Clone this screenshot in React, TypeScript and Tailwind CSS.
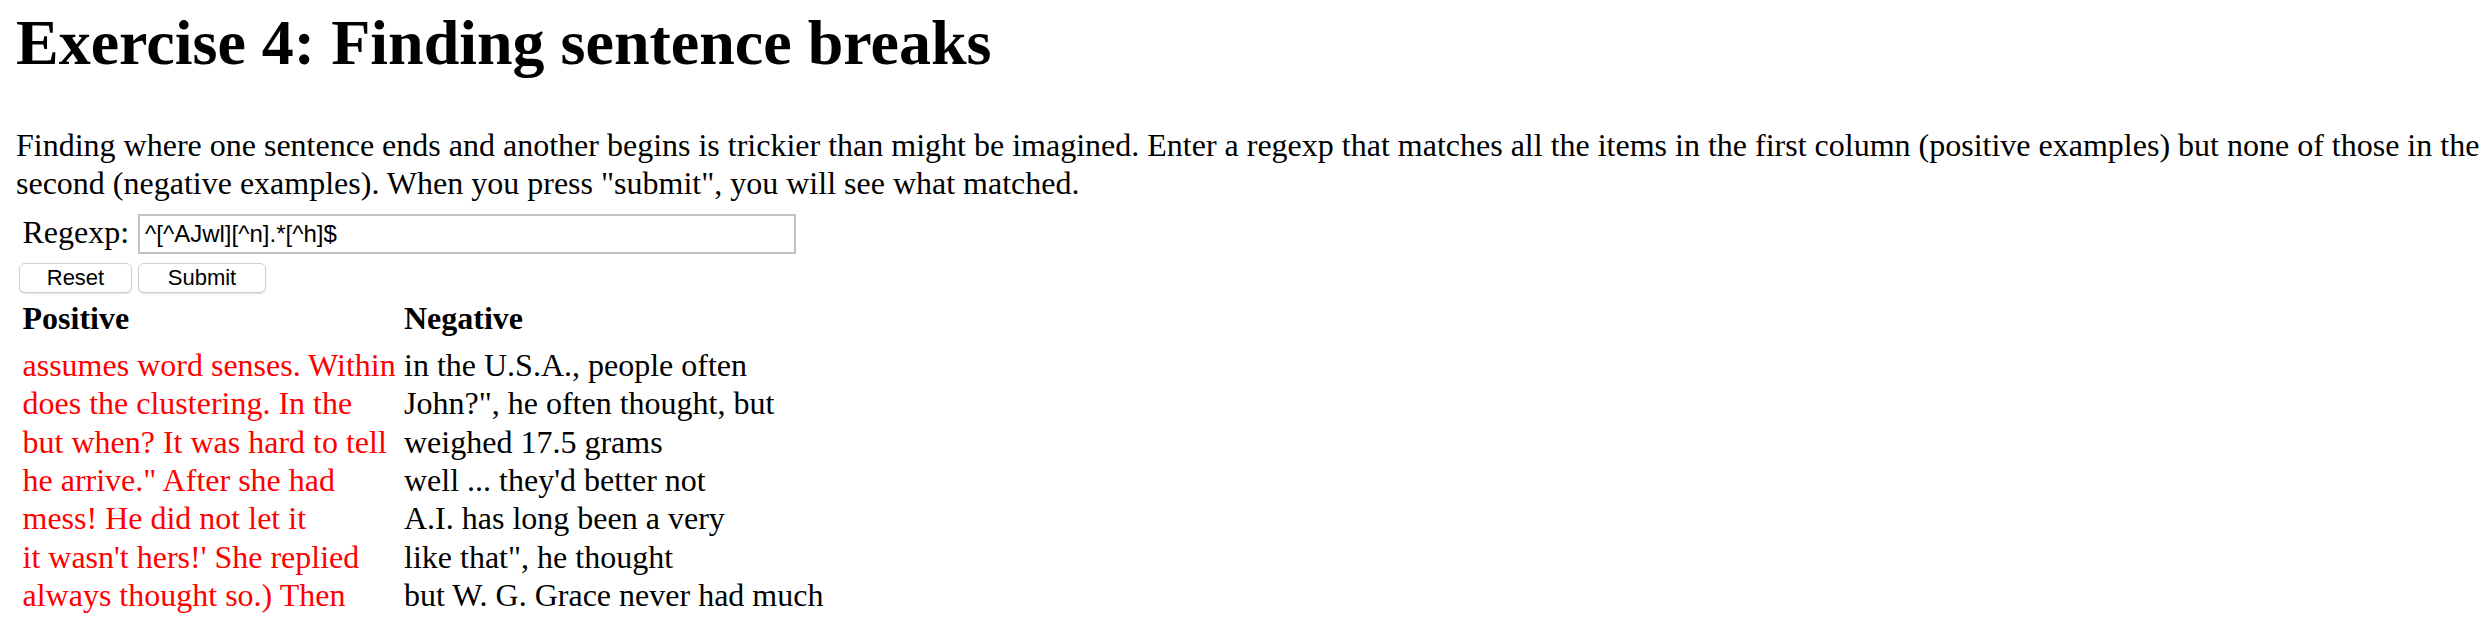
import React from "react";

const positives = [
  "assumes word senses. Within",
  "does the clustering. In the",
  "but when? It was hard to tell",
  'he arrive." After she had',
  "mess! He did not let it",
  "it wasn't hers!' She replied",
  "always thought so.) Then",
];

const negatives = [
  "in the U.S.A., people often",
  'John?", he often thought, but',
  "weighed 17.5 grams",
  "well ... they'd better not",
  "A.I. has long been a very",
  'like that", he thought',
  "but W. G. Grace never had much",
];

export default function App() {
  return (
    <div className="min-h-[624px] bg-white px-[16px] text-black font-['Liberation_Serif','Times_New_Roman',serif] text-[32px] leading-[38.4px]">
      <h1 className="pt-[5px] text-[64px] leading-[76.8px] font-bold whitespace-nowrap">
        Exercise 4: Finding sentence breaks
      </h1>
      <p className="mt-[44px] whitespace-nowrap">
        Finding where one sentence ends and another begins is trickier than might be imagined. Enter a regexp that matches all the items in the first column (positive examples) but none of those in the
        <br />
        second (negative examples). When you press "submit", you will see what matched.
      </p>
      <div className="mt-[10px] flex items-start">
        <span className="ml-[6.5px] w-[115.5px]">Regexp:</span>
        <input
          type="text"
          defaultValue="^[^AJwl][^n].*[^h]$"
          className="mt-[1.5px] h-[40px] w-[658px] border-2 border-[#c2c2c2] bg-white pl-[5px] font-['Liberation_Sans',Arial,sans-serif] text-[24px] text-black outline-none"
        />
      </div>
      <div className="mt-[9.3px] flex gap-[6px] pl-[3px]">
        <button className="h-[30px] w-[113px] rounded-[6px] border border-[#cfcfcf] bg-white font-['Liberation_Sans',Arial,sans-serif] text-[22px] leading-[28px] text-black shadow-[0_1px_1px_rgba(0,0,0,0.12)]">
          Reset
        </button>
        <button className="h-[30px] w-[128px] rounded-[6px] border border-[#cfcfcf] bg-white font-['Liberation_Sans',Arial,sans-serif] text-[22px] leading-[28px] text-black shadow-[0_1px_1px_rgba(0,0,0,0.12)]">
          Submit
        </button>
      </div>
      <div className="mt-[5.9px] grid grid-cols-[381.5px_auto] pl-[6.5px]">
        <div className="font-bold">Positive</div>
        <div className="font-bold">Negative</div>
        <div className="mt-[8.1px] text-[#ff0000] whitespace-nowrap">
          {positives.map((t, i) => (
            <div key={i}>{t}</div>
          ))}
        </div>
        <div className="mt-[8.1px] whitespace-nowrap">
          {negatives.map((t, i) => (
            <div key={i}>{t}</div>
          ))}
        </div>
      </div>
    </div>
  );
}
